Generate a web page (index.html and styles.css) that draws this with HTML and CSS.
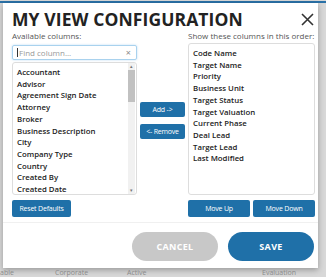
FILE: index.html
```html
<!DOCTYPE html>
<html lang="en">
<head>
    <meta charset="UTF-8">
    <meta name="viewport" content="width=device-width, initial-scale=1.0">
    <title>My View Configuration</title>
    <link rel="stylesheet" href="styles.css">
</head>
<body>

    <!-- Page behind the modal -->
    <div class="page-top"></div>

    <!-- Modal -->
    <div class="modal">
        <div class="modal-header">
            <h1 class="modal-title">MY VIEW CONFIGURATION</h1>
            <button class="close-btn" aria-label="Close">
                <svg width="13" height="13" viewBox="0 0 13 13">
                    <path d="M1 1 L12 12 M12 1 L1 12" stroke="#333" stroke-width="1.6" fill="none"/>
                </svg>
            </button>
        </div>

        <div class="columns">
            <div class="col-label">Available columns:</div>
            <div></div>
            <div class="col-label">Show these columns in this order:</div>

            <div class="left-col">
                <div class="search">
                    <span class="caret"></span>
                    <span class="placeholder">Find column...</span>
                    <span class="clear">&times;</span>
                </div>
                <div class="list list-available">
                    <ul class="items">
                        <li>Accountant</li>
                        <li>Advisor</li>
                        <li>Agreement Sign Date</li>
                        <li>Attorney</li>
                        <li>Broker</li>
                        <li>Business Description</li>
                        <li>City</li>
                        <li>Company Type</li>
                        <li>Country</li>
                        <li>Created By</li>
                        <li>Created Date</li>
                    </ul>
                    <div class="scrollbar">
                        <span class="arrow">&#9652;</span>
                        <div class="track"><div class="thumb"></div></div>
                        <span class="arrow">&#9662;</span>
                    </div>
                </div>
            </div>

            <div class="mid-col">
                <button class="btn btn-small">Add -&gt;</button>
                <button class="btn btn-small">&lt;- Remove</button>
            </div>

            <div class="list list-selected">
                <ul class="items">
                    <li>Code Name</li>
                    <li>Target Name</li>
                    <li>Priority</li>
                    <li>Business Unit</li>
                    <li>Target Status</li>
                    <li>Target Valuation</li>
                    <li>Current Phase</li>
                    <li>Deal Lead</li>
                    <li>Target Lead</li>
                    <li>Last Modified</li>
                </ul>
            </div>

            <div class="row-actions">
                <button class="btn btn-reset">Reset Defaults</button>
            </div>
            <div></div>
            <div class="row-actions move-actions">
                <button class="btn btn-move">Move Up</button>
                <button class="btn btn-move">Move Down</button>
            </div>
        </div>

        <div class="modal-footer">
            <button class="pill pill-cancel">CANCEL</button>
            <button class="pill pill-save">SAVE</button>
        </div>
    </div>

    <!-- Table header peeking out below -->
    <div class="page-bottom">
        <span class="bg-col c1">able</span>
        <span class="bg-col c2">Corporate</span>
        <span class="bg-col c3">Active</span>
        <span class="bg-col c4">Evaluation</span>
    </div>

</body>
</html>
```

FILE: styles.css
```css
/* Global Styles */
body {
    font-family: 'Open Sans', sans-serif;
    margin: 0;
    padding: 0;
    background: #d8d8d8;
    color: #333;
    width: 326px;
    height: 277px;
    overflow: hidden;
}

button {
    font-family: inherit;
    cursor: pointer;
}

/* Page behind */
.page-top {
    height: 1px;
    border-bottom: 2px solid #2a72a8;
}

.page-bottom {
    display: flex;
    height: 9px;
    font-size: 7px;
    line-height: 9px;
    color: #8a8a8a;
}

.bg-col.c1 { width: 55px; }
.bg-col.c2 { width: 72px; }
.bg-col.c3 { width: 135px; }

/* Modal */
.modal {
    background: #fff;
    margin-left: 3px;
    width: 315px;
    height: 265px;
    box-sizing: border-box;
    padding: 5px 4px 0 9px;
    box-shadow: 0 2px 6px rgba(0, 0, 0, 0.3);
}

.modal-header {
    display: flex;
    justify-content: space-between;
    align-items: center;
    height: 22px;
}

.modal-title {
    margin: 0;
    font-size: 17.5px;
    font-weight: 700;
    color: #222;
    letter-spacing: 0.1px;
}

.close-btn {
    border: none;
    background: none;
    padding: 0;
    display: flex;
}

/* Columns */
.columns {
    display: grid;
    grid-template-columns: 125px 45px 127px;
    grid-template-rows: 13px 152px 22px;
    column-gap: 3px;
}

.col-label {
    font-size: 8px;
    color: #555;
    line-height: 12px;
    white-space: nowrap;
}

.left-col {
    display: flex;
    flex-direction: column;
    gap: 2px;
    padding-top: 2px;
}

.search {
    display: flex;
    align-items: center;
    height: 15px;
    border: 1px solid #a9d2ee;
    border-radius: 2px;
    box-shadow: 0 0 2px rgba(102, 175, 233, 0.5);
    padding: 0 5px 0 4px;
    font-size: 8px;
    box-sizing: border-box;
}

.caret {
    width: 1px;
    height: 9px;
    background: #333;
    margin-right: 1px;
}

.placeholder {
    flex: 1;
    color: #999;
}

.clear {
    color: #888;
    font-size: 9px;
}

.list {
    border: 1px solid #ddd;
    border-radius: 3px;
    overflow: hidden;
    box-sizing: border-box;
}

.list-available {
    flex: 1;
    display: flex;
}

.items {
    list-style: none;
    margin: 0;
    padding: 4px 0 0 4px;
    flex: 1;
    font-size: 7.8px;
    font-weight: 600;
    line-height: 11.7px;
    color: #222;
}

/* Fake scrollbar */
.scrollbar {
    width: 7px;
    background: #f1f1f1;
    display: flex;
    flex-direction: column;
    margin-right: 1px;
}

.arrow {
    font-size: 5px;
    line-height: 7px;
    text-align: center;
    color: #777;
}

.track {
    flex: 1;
}

.thumb {
    height: 32px;
    background: #c1c1c1;
}

/* Middle buttons */
.mid-col {
    display: flex;
    flex-direction: column;
    justify-content: center;
    gap: 7px;
    padding-top: 2px;
}

.btn {
    background: #1f70a8;
    color: #fff;
    border: none;
    border-radius: 2px;
    font-size: 7px;
    padding: 0;
    letter-spacing: -0.2px;
}

.btn-small {
    height: 15px;
}

.row-actions {
    padding-top: 5px;
    display: flex;
}

.btn-reset {
    width: 59px;
    height: 17px;
}

.move-actions {
    gap: 3px;
}

.btn-move {
    flex: 1;
    height: 17px;
}

/* Footer */
.modal-footer {
    display: flex;
    justify-content: flex-end;
    gap: 10px;
    border-top: 1px solid #f0f0f0;
    margin: 5px -4px 0 -9px;
    padding: 9px 4px 0 0;
}

.pill {
    width: 86px;
    height: 29px;
    border: none;
    border-radius: 15px;
    color: #fff;
    font-size: 9px;
    font-weight: 700;
    letter-spacing: 0.3px;
}

.pill-cancel {
    background: #c8c8c8;
}

.pill-save {
    background: #1f70a8;
}
```
